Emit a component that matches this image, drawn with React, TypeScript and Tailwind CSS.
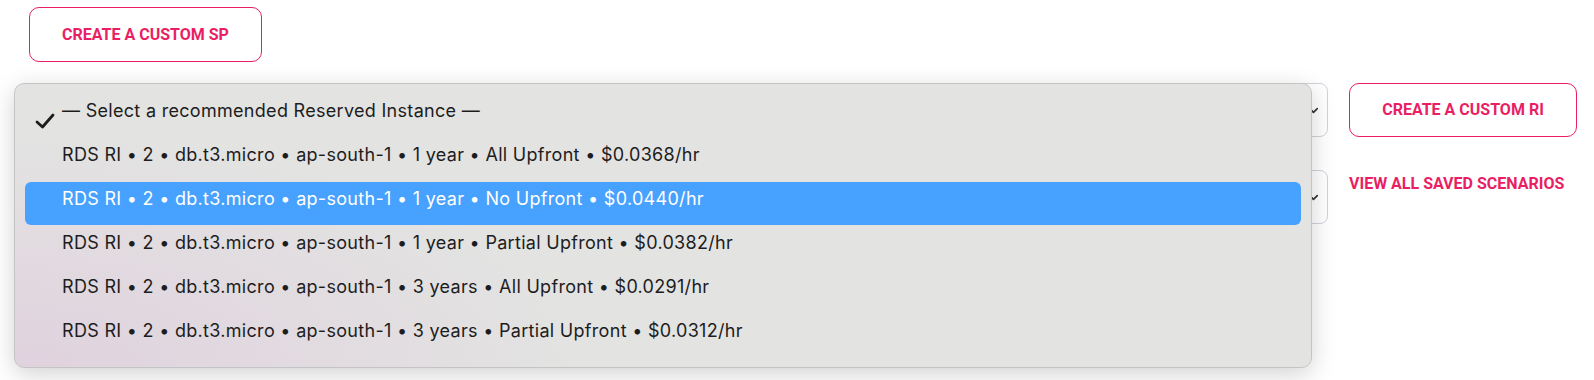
import { ChevronDown } from 'lucide-react';

const options = [
  'RDS RI • 2 • db.t3.micro • ap-south-1 • 1 year • All Upfront • $0.0368/hr',
  'RDS RI • 2 • db.t3.micro • ap-south-1 • 1 year • No Upfront • $0.0440/hr',
  'RDS RI • 2 • db.t3.micro • ap-south-1 • 1 year • Partial Upfront • $0.0382/hr',
  'RDS RI • 2 • db.t3.micro • ap-south-1 • 3 years • All Upfront • $0.0291/hr',
  'RDS RI • 2 • db.t3.micro • ap-south-1 • 3 years • Partial Upfront • $0.0312/hr',
];

const SelectBox = () => (
  <div className="h-[54px] w-full rounded-[8px] border border-[#cfd3da] bg-white flex items-center justify-end pr-[6px]">
    <ChevronDown className="w-[15px] h-[15px] text-[#333]" strokeWidth={2.6} />
  </div>
);

export default function App() {
  return (
    <div className="relative min-h-[380px] w-full bg-white font-['Roboto',sans-serif]">
      <div className="pl-[29px] pr-[17px] pt-[7px]">
        {/* Savings plan button */}
        <button className="h-[55px] w-[233px] rounded-[10px] border border-[#e91e63] text-[#e91e63] text-[16px] font-bold">
          CREATE A CUSTOM SP
        </button>

        <div className="mt-[21px] flex gap-[21px]">
          {/* Recommendation selects */}
          <div className="flex-1 flex flex-col gap-[33px]">
            <SelectBox />
            <SelectBox />
          </div>

          {/* Actions */}
          <div className="w-[228px] flex flex-col">
            <button className="h-[54px] w-full rounded-[10px] border border-[#e91e63] text-[#e91e63] text-[16px] font-bold">
              CREATE A CUSTOM RI
            </button>
            <a className="mt-[37px] text-[#e91e63] text-[16px] font-bold leading-[20px] cursor-pointer whitespace-nowrap">
              VIEW ALL SAVED SCENARIOS
            </a>
          </div>
        </div>
      </div>

      {/* Native select popup menu */}
      <div className="absolute left-[14px] top-[83px] w-[1298px] h-[285px] rounded-[10px] border border-[#c4c4c4] bg-[radial-gradient(ellipse_560px_230px_at_0%_100%,#e0d2de,#e3e3e2)] shadow-[0_6px_24px_rgba(0,0,0,0.18)] font-['Inter','Noto_Sans',sans-serif] text-[18px] text-[#1d1d1d] tracking-[0.3px] pt-[4px]">
        <div className="relative h-[44px] flex items-center pl-[47px]">
          <svg className="absolute left-[20px] top-[25px] w-[20px] h-[16px]" viewBox="0 0 20 16" fill="none">
            <path d="M2 9 L7.5 14 L18 2" stroke="#1d1d1d" strokeWidth="2.8" strokeLinecap="round" strokeLinejoin="round" />
          </svg>
          <span>— Select a recommended Reserved Instance —</span>
        </div>
        {options.map((opt, i) => (
          <div key={i} className="relative h-[44px] px-[10px]">
            {i === 1 && <div className="absolute left-[10px] right-[10px] top-[6px] h-[43px] rounded-[6px] bg-[#47a1fe]" />}
            <div className={`relative h-full flex items-center pl-[37px] ${i === 1 ? 'text-white' : ''}`}>
              {opt}
            </div>
          </div>
        ))}
      </div>
    </div>
  );
}
